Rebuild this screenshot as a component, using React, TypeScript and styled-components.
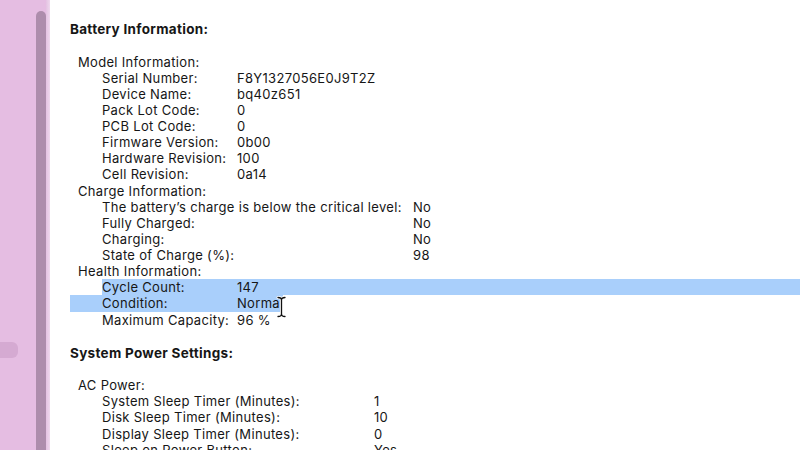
import React from "react";
import styled, { createGlobalStyle } from "styled-components";

const GlobalStyle = createGlobalStyle`
  html, body {
    margin: 0;
    padding: 0;
    background: #ffffff;
  }
  body {
    font-family: Inter, "Liberation Sans", Arial, sans-serif;
    color: #161616;
  }
`;

type Item = { label: string; value?: string; sel?: "head" | "tail" };
type Group = { title: string; labelWidth: number; items: Item[] };
type Section = { title: string; groups: Group[] };

const sections: Section[] = [
  {
    title: "Battery Information:",
    groups: [
      {
        title: "Model Information:",
        labelWidth: 135,
        items: [
          { label: "Serial Number:", value: "F8Y1327056E0J9T2Z" },
          { label: "Device Name:", value: "bq40z651" },
          { label: "Pack Lot Code:", value: "0" },
          { label: "PCB Lot Code:", value: "0" },
          { label: "Firmware Version:", value: "0b00" },
          { label: "Hardware Revision:", value: "100" },
          { label: "Cell Revision:", value: "0a14" },
        ],
      },
      {
        title: "Charge Information:",
        labelWidth: 311,
        items: [
          { label: "The battery\u2019s charge is below the critical level:", value: "No" },
          { label: "Fully Charged:", value: "No" },
          { label: "Charging:", value: "No" },
          { label: "State of Charge (%):", value: "98" },
        ],
      },
      {
        title: "Health Information:",
        labelWidth: 135,
        items: [
          { label: "Cycle Count:", value: "147", sel: "head" },
          { label: "Condition:", value: "Normal", sel: "tail" },
          { label: "Maximum Capacity:", value: "96 %" },
        ],
      },
    ],
  },
  {
    title: "System Power Settings:",
    groups: [
      {
        title: "AC Power:",
        labelWidth: 272,
        items: [
          { label: "System Sleep Timer (Minutes):", value: "1" },
          { label: "Disk Sleep Timer (Minutes):", value: "10" },
          { label: "Display Sleep Timer (Minutes):", value: "0" },
          { label: "Sleep on Power Button:", value: "Yes" },
        ],
      },
    ],
  },
];

const Window = styled.div`
  display: flex;
  width: 800px;
  height: 450px;
  overflow: hidden;
`;

const Sidebar = styled.aside`
  display: flex;
  width: 50px;
  flex-shrink: 0;
  background: #e5bde2;
`;

const SidebarList = styled.div`
  width: 36px;
  padding-top: 342px;
`;

const SidebarItem = styled.div`
  width: 18px;
  height: 16px;
  background: #d5aad2;
  border-radius: 0 6px 6px 0;
`;

const Divider = styled.div`
  width: 10px;
  margin-top: 11px;
  background: #ad8dac;
  border-radius: 5px 5px 0 0;
`;

const Edge = styled.div`
  width: 4px;
  background: linear-gradient(90deg, #e4c2e2, #efd9ee);
`;

const Content = styled.main`
  flex: 1;
  padding: 21px 0 0 20px;
  font-size: 13px;
  line-height: 16.12px;
  letter-spacing: 0.32px;
`;

const SectionBlock = styled.section`
  & + & {
    margin-top: 17px;
  }
`;

const Heading = styled.h2`
  margin: 0 0 16.5px;
  font-size: 13.5px;
  font-weight: 700;
  letter-spacing: 0.3px;
  line-height: 16px;
`;

const GroupTitle = styled.div`
  padding-left: 8px;
`;

const Row = styled.div<{ $labelWidth: number; $sel?: "head" | "tail" }>`
  position: relative;
  display: grid;
  grid-template-columns: ${(p) => p.$labelWidth}px auto;
  justify-content: start;
  padding-left: 32px;
  white-space: nowrap;
  ${(p) =>
    p.$sel === "head" &&
    `
    background: #a9cffb;
    background-clip: content-box;
  `}
  ${(p) =>
    p.$sel === "tail" &&
    `
    width: 181px;
    background: #a9cffb;
  `}
`;

const Cursor = styled.svg`
  position: absolute;
  left: 207px;
  top: 1px;
  width: 9px;
  height: 22px;
  overflow: visible;
`;

const IBeam = () => (
  <Cursor viewBox="0 0 9 22">
    <g fill="none" strokeLinecap="round">
      <path
        d="M1 1.5 Q4.5 1.5 4.5 4 Q4.5 1.5 8 1.5 M4.5 4 V18 M1 20.5 Q4.5 20.5 4.5 18 Q4.5 20.5 8 20.5"
        stroke="#ffffff"
        strokeWidth="3"
      />
      <path
        d="M1 1.5 Q4.5 1.5 4.5 4 Q4.5 1.5 8 1.5 M4.5 4 V18 M1 20.5 Q4.5 20.5 4.5 18 Q4.5 20.5 8 20.5"
        stroke="#111111"
        strokeWidth="1.3"
      />
    </g>
  </Cursor>
);

export default function App() {
  return (
    <>
      <GlobalStyle />
      <Window>
        <Sidebar>
          <SidebarList>
            <SidebarItem />
          </SidebarList>
          <Divider />
          <Edge />
        </Sidebar>
        <Content>
          {sections.map((section) => (
            <SectionBlock key={section.title}>
              <Heading>{section.title}</Heading>
              {section.groups.map((group) => (
                <div key={group.title}>
                  <GroupTitle>{group.title}</GroupTitle>
                  {group.items.map((item) => (
                    <Row key={item.label} $labelWidth={group.labelWidth} $sel={item.sel}>
                      <span>{item.label}</span>
                      <span>{item.value}</span>
                      {item.sel === "tail" && <IBeam />}
                    </Row>
                  ))}
                </div>
              ))}
            </SectionBlock>
          ))}
        </Content>
      </Window>
    </>
  );
}
